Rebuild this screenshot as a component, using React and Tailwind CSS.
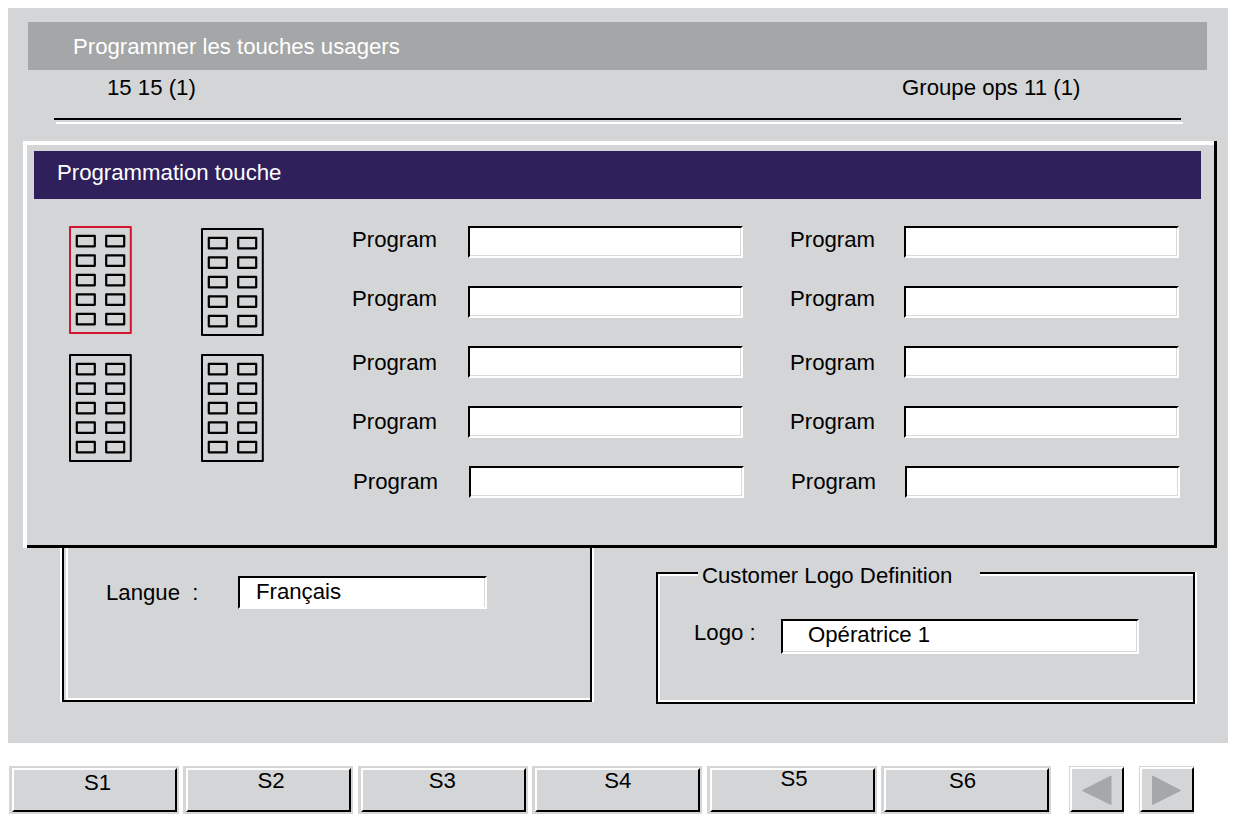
import React from "react";

const programRows = [
  { key: "p1", labelClass: "mt-px", rowClass: "" },
  { key: "p2", labelClass: "mt-0", rowClass: "" },
  { key: "p3", labelClass: "mt-1", rowClass: "" },
  { key: "p4", labelClass: "mt-[3px]", rowClass: "" },
  { key: "p5", labelClass: "mt-[3px]", rowClass: "ml-px" },
];

const softKeys = [
  { label: "S1", labelClass: "ml-[70px]" },
  { label: "S2", labelClass: "ml-[69px] -mt-[2px]" },
  { label: "S3", labelClass: "ml-[66px] -mt-[2px]" },
  { label: "S4", labelClass: "ml-[67px] -mt-[2px]" },
  { label: "S5", labelClass: "ml-[69px] -mt-[4px]" },
  { label: "S6", labelClass: "ml-[63px] -mt-[2px]" },
];

function Field({ className, innerClass = "border-b", children }) {
  return (
    <div className={`shrink-0 bg-white border-2 border-t-black border-l-black border-r-white border-b-white ${className}`}>
      <div className={`h-full border-r border-[#d8d9da] whitespace-pre ${innerClass}`}>{children}</div>
    </div>
  );
}

function KeyPad({ selected }) {
  return (
    <svg width="63" height="108" viewBox="0 0 63 108" fill="none" stroke="black" strokeWidth="2" strokeLinejoin="round">
      <rect x="1" y="1" width="60.8" height="106" stroke={selected ? "#d5142f" : "black"} />
      {[0, 1, 2, 3, 4].map((row) => (
        <g key={row} strokeWidth="2.2">
          <rect x="7.8" y={9.9 + row * 19.5} width="18" height="10.4" />
          <rect x="37.2" y={9.9 + row * 19.5} width="18" height="10.4" />
        </g>
      ))}
    </svg>
  );
}

function ProgramColumn({ className, labelWidth }) {
  return (
    <div className={className}>
      {programRows.map((row) => (
        <div key={row.key} className={`flex h-[60px] items-start ${row.rowClass}`}>
          <span className={`shrink-0 ${labelWidth} ${row.labelClass}`}>Program</span>
          <Field className="w-[275px] h-8" />
        </div>
      ))}
    </div>
  );
}

function ArrowKey({ className, points }) {
  return (
    <button className={`w-[55px] h-12 bg-[#d4d5d6] pl-px pt-px pb-[2px] ${className}`}>
      <div className="h-full border-2 border-t-white border-l-white border-r-black border-b-black">
        <svg width="50" height="41" viewBox="0 0 50 41" fill="#a5a7a8" stroke="#a5a7a8" strokeLinejoin="round">
          <polygon points={points} />
        </svg>
      </div>
    </button>
  );
}

function App() {
  return (
    <div className="w-[1234px] h-[815px] overflow-hidden bg-white pt-2 text-black text-[22.2px] leading-[26px] font-['Liberation_Sans',Arial,sans-serif]">
      <div className="ml-2 w-[1220px] h-[735px] bg-[#d4d5d6] flex flex-col items-start">
        <div className="mt-[14px] ml-5 w-[1179px] h-12 shrink-0 bg-[#a5a6a7] pl-[45px] pt-3 text-white">
          Programmer les touches usagers
        </div>
        <div className="flex h-12 shrink-0 pl-[99px] pt-[5px]">
          <span className="w-[795px]">15 15 (1)</span>
          <span>Groupe ops 11 (1)</span>
        </div>
        <div className="ml-[46px] w-[1127px] h-0.5 shrink-0 bg-black" />
        <div className="mt-0.5 ml-12 w-[1127px] h-0.5 shrink-0 bg-white" />

        {/* Key programming dialog */}
        <div className="mt-[17px] ml-[15px] w-[1194px] h-[407px] shrink-0 border-l-4 border-white">
          <div className="h-full border-r-[3px] border-b-[3px] border-black">
            <div className="h-full border-t-4 border-white">
              <div className="mt-[6px] ml-[7px] w-[1167px] h-12 bg-[#2f1f5b] pl-[23px] pt-[9px] text-white">
                Programmation touche
              </div>
              <div className="flex items-start">
                <div className="ml-[42px] mt-[27px] flex flex-col gap-5">
                  <KeyPad selected />
                  <KeyPad />
                </div>
                <div className="ml-[69px] mt-[29px] flex flex-col gap-[18px]">
                  <KeyPad />
                  <KeyPad />
                </div>
                <ProgramColumn className="ml-[88px] mt-[27px]" labelWidth="w-[116px]" />
                <ProgramColumn className="ml-[46px] mt-[27px]" labelWidth="w-[114px]" />
              </div>
            </div>
          </div>
        </div>

        <div className="flex items-start">
          {/* Language group, its top edge is hidden by the dialog */}
          <div className="ml-[52px] w-[534px] h-[154px] border-x-2 border-white">
            <div className="h-full border-x-2 border-b-2 border-black pl-0.5">
              <div className="h-full border-l-2 border-b-2 border-white flex items-start pl-[38px] pt-7">
                <span className="mt-1 w-[132px] whitespace-pre">Langue  :</span>
                <Field className="w-[249px] h-[33px]" innerClass="pl-[16px] pt-px">Français</Field>
              </div>
            </div>
          </div>

          {/* Logo group */}
          <div className="ml-[62px] mt-6 w-[541px] h-[132px] border-r-2 border-white">
            <div className="h-full border-2 border-black">
              <div className="h-full border-l-2 border-y-2 border-white">
                <div className="-mt-[13px] ml-[38px] w-[282px] h-6 bg-[#d4d5d6] pl-1">
                  Customer Logo Definition
                </div>
                <div className="mt-8 ml-[34px] flex items-start">
                  <span className="mt-px w-[87px]">Logo :</span>
                  <Field className="w-[358px] h-[35px]" innerClass="border-b pl-[25px] pt-px">Opératrice 1</Field>
                </div>
              </div>
            </div>
          </div>
        </div>
      </div>

      {/* Soft keys */}
      <div className="mt-[23px] ml-[9px] flex items-start">
        <div className="flex gap-[4.4px]">
          {softKeys.map((item) => (
            <button key={item.label} className="w-[170px] h-12 bg-[#d4d5d6] pl-[3px] pr-[2px] py-[2px] text-left">
              <div className="h-full border-2 border-t-white border-l-white border-r-black border-b-black">
                <div className={item.labelClass}>{item.label}</div>
              </div>
            </button>
          ))}
        </div>
        <ArrowKey className="ml-[18px]" points="10.5,21.5 39,7 39,35.5" />
        <ArrowKey className="ml-[15px]" points="38.5,21.5 10.5,7 10.5,35.5" />
      </div>
    </div>
  );
}

export default App;
